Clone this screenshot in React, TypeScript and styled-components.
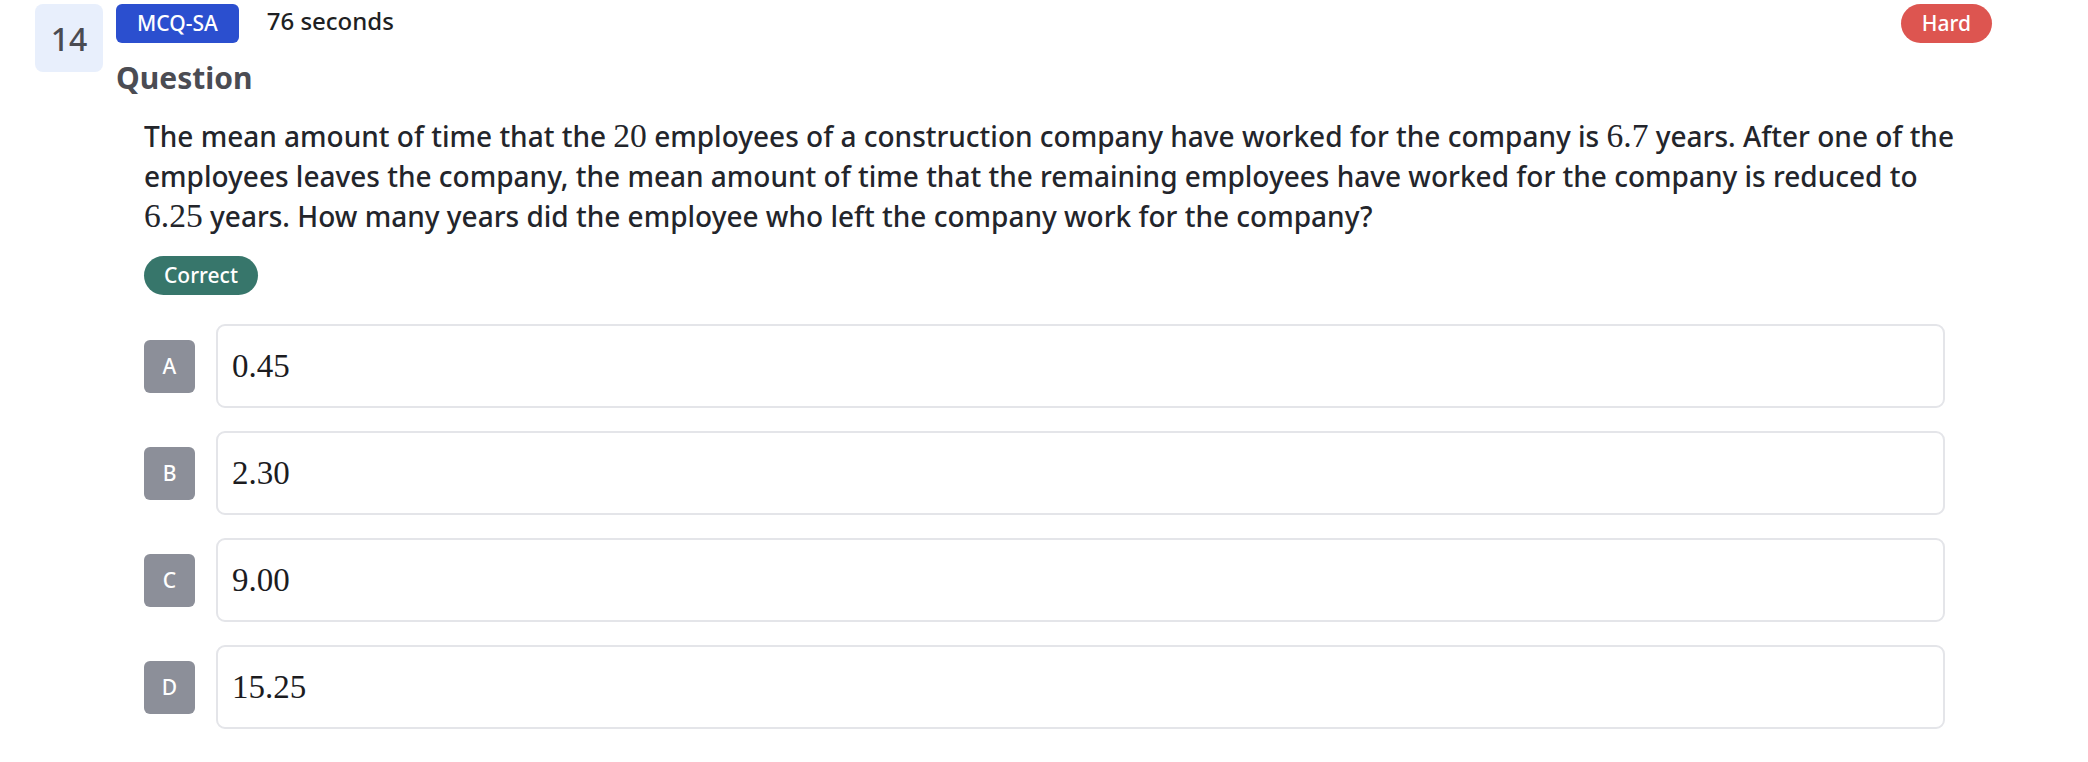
import React from "react";
import styled, { createGlobalStyle } from "styled-components";

const Global = createGlobalStyle`
  html, body { margin: 0; padding: 0; background: #ffffff; }
  body { font-family: "Noto Sans", "Open Sans", sans-serif; color: #212328; }
`;

const Page = styled.div`
  display: flex;
  align-items: flex-start;
  gap: 13px;
  padding: 4px 96px 0 35px;
`;

const NumberBox = styled.div`
  flex: none;
  width: 68px;
  height: 68px;
  border-radius: 8px;
  background: #e8effc;
  color: #4a4b52;
  font-size: 32px;
  font-weight: 500;
  display: flex;
  align-items: center;
  justify-content: center;
`;

const Main = styled.div`
  flex: 1;
  min-width: 0;
  display: flex;
  flex-direction: column;
`;

const HeaderRow = styled.div`
  display: flex;
  align-items: flex-start;
  height: 39px;
`;

const Badge = styled.span<{ $bg: string; $pill?: boolean }>`
  display: inline-flex;
  align-items: center;
  justify-content: center;
  height: 39px;
  padding: 0 21px;
  border-radius: ${(p) => (p.$pill ? "20px" : "6px")};
  background: ${(p) => p.$bg};
  color: #ffffff;
  font-size: 21px;
  font-weight: 500;
  line-height: 1;
  box-sizing: border-box;
`;

const Seconds = styled.span`
  margin-left: 28px;
  margin-top: 1px;
  font-size: 24px;
  font-weight: 500;
  line-height: 32px;
  color: #1e1f23;
`;

const Spacer = styled.div`
  flex: 1;
`;

const Heading = styled.h2`
  margin: 17px 0 0;
  font-size: 30px;
  line-height: 36px;
  font-weight: 700;
  color: #4b4c53;
`;

const Body = styled.div`
  padding: 0 28px;
  display: flex;
  flex-direction: column;
  align-items: flex-start;
`;

const Paragraph = styled.p`
  margin: 20px 0 0;
  font-size: 28px;
  font-weight: 500;
  line-height: 40px;
  color: #23252b;
`;

const Math = styled.span`
  font-family: "Liberation Serif", "Times New Roman", serif;
  font-weight: 400;
  font-size: 1.2em;
  line-height: 1;
`;

const Status = styled(Badge)`
  margin-top: 20px;
  padding: 0 20px;
`;

const Options = styled.div`
  align-self: stretch;
  margin-top: 29px;
  padding-right: 19px;
  display: flex;
  flex-direction: column;
  gap: 23px;
`;

const OptionRow = styled.div`
  display: flex;
  align-items: center;
  gap: 21px;
`;

const Letter = styled.div`
  flex: none;
  width: 51px;
  height: 53px;
  border-radius: 6px;
  background: #8c8f99;
  color: #ffffff;
  font-size: 21px;
  font-weight: 500;
  display: flex;
  align-items: center;
  justify-content: center;
`;

const OptionCard = styled.div`
  flex: 1;
  height: 84px;
  box-sizing: border-box;
  border: 2px solid #e4e5e9;
  border-radius: 9px;
  padding: 0 14px;
  display: flex;
  align-items: center;
`;

const OptionValue = styled.span`
  font-family: "Liberation Serif", "Times New Roman", serif;
  font-size: 33px;
  color: #1c1c1f;
`;

const options = [
  { letter: "A", value: "0.45" },
  { letter: "B", value: "2.30" },
  { letter: "C", value: "9.00" },
  { letter: "D", value: "15.25" },
];

export default function App() {
  return (
    <>
      <Global />
      <Page>
        <NumberBox>14</NumberBox>
        <Main>
          <HeaderRow>
            <Badge $bg="#2b4fcf">MCQ-SA</Badge>
            <Seconds>76 seconds</Seconds>
            <Spacer />
            <Badge $bg="#dd5550" $pill>
              Hard
            </Badge>
          </HeaderRow>
          <Heading>Question</Heading>
          <Body>
            <Paragraph>
              The mean amount of time that the <Math>20</Math> employees of a
              construction company have worked for the company is{" "}
              <Math>6.7</Math> years. After one of the employees leaves the
              company, the mean amount of time that the remaining employees
              have worked for the company is reduced to <Math>6.25</Math>{" "}
              years. How many years did the employee who left the company work
              for the company?
            </Paragraph>
            <Status $bg="#37766b" $pill>
              Correct
            </Status>
            <Options>
              {options.map((o) => (
                <OptionRow key={o.letter}>
                  <Letter>{o.letter}</Letter>
                  <OptionCard>
                    <OptionValue>{o.value}</OptionValue>
                  </OptionCard>
                </OptionRow>
              ))}
            </Options>
          </Body>
        </Main>
      </Page>
    </>
  );
}
